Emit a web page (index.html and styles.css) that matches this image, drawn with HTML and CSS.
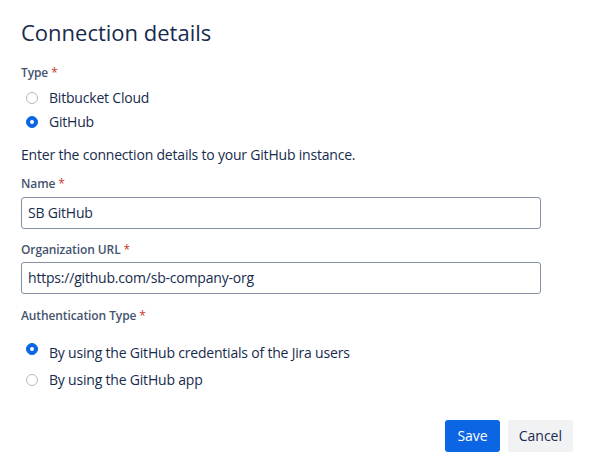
FILE: index.html
```html
<!DOCTYPE html>
<html lang="en">
<head>
<meta charset="utf-8">
<title>Connection details</title>
<link rel="stylesheet" href="styles.css">
</head>
<body>
<main class="page">
  <h1 class="title">Connection details</h1>

  <div class="label label-type">Type<span class="req">*</span></div>
  <div class="radio-group radio-group-type">
    <div class="radio-row"><span class="radio"></span><span class="radio-text">Bitbucket Cloud</span></div>
    <div class="radio-row"><span class="radio checked"></span><span class="radio-text">GitHub</span></div>
  </div>

  <p class="desc">Enter the connection details to your GitHub instance.</p>

  <div class="label label-name">Name<span class="req">*</span></div>
  <div class="input input-name">SB GitHub</div>

  <div class="label label-org">Organization URL<span class="req">*</span></div>
  <div class="input input-org">https://github.com/sb-company-org</div>

  <div class="label label-auth">Authentication Type<span class="req">*</span></div>
  <div class="radio-group radio-group-auth">
    <div class="radio-row radio-row-top"><span class="radio checked"></span><span class="radio-text">By using the GitHub credentials of the Jira users</span></div>
    <div class="radio-row radio-row-second"><span class="radio"></span><span class="radio-text">By using the GitHub app</span></div>
  </div>

  <div class="actions">
    <button class="btn btn-primary" type="button">Save</button>
    <button class="btn btn-subtle" type="button">Cancel</button>
  </div>
</main>
</body>
</html>
```
FILE: styles.css
```css
* { box-sizing: border-box; }
html, body { margin: 0; padding: 0; background: #ffffff; }
body {
  font-family: "Open Sans", "Noto Sans", sans-serif;
  font-size: 14px;
  color: #172B4D;
  letter-spacing: -0.2px;
}
.page {
  padding: 0 21px;
  display: flex;
  flex-direction: column;
  align-items: flex-start;
}
.title {
  margin: 20px 0 0;
  font-size: 22px;
  line-height: 24px;
  font-weight: 500;
  letter-spacing: 0;
  color: #172B4D;
}
.label {
  font-size: 12px;
  line-height: 16px;
  font-weight: 600;
  letter-spacing: -0.1px;
  color: #44546F;
}
.req { color: #C9372C; font-weight: 400; padding-left: 3px; }
.label-type { margin-top: 21px; }
.radio-group { display: flex; flex-direction: column; }
.radio-group-type { margin-top: 5px; }
.radio-row {
  display: flex;
  align-items: center;
  height: 24px;
  line-height: 20px;
  padding-left: 5px;
  gap: 11px;
}
.radio {
  width: 12px;
  height: 12px;
  flex: 0 0 12px;
  border-radius: 50%;
  border: 1px solid #B3B9C4;
  background: #ffffff;
  display: flex;
  align-items: center;
  justify-content: center;
}
.radio.checked {
  background: #0C66E4;
  border-color: #0C66E4;
}
.radio.checked::after {
  content: "";
  width: 4px;
  height: 4px;
  border-radius: 50%;
  background: #ffffff;
}
.desc {
  margin: 11px 0 0;
  line-height: 20px;
}
.label-name { margin-top: 11px; }
.input {
  width: 520px;
  height: 32px;
  border: 1px solid #8590A2;
  border-radius: 3px;
  padding: 0 6px;
  display: flex;
  align-items: center;
  line-height: 20px;
  color: #172B4D;
}
.input-name { margin-top: 5px; }
.label-org { margin-top: 13px; }
.input-org { margin-top: 4px; }
.label-auth { margin-top: 14px; }
.radio-group-auth { margin-top: 18px; gap: 2px; }
.radio-row-top { align-items: flex-start; }
.radio-row-top .radio { margin-top: 1px; }
.radio-row-top .radio-text { margin-top: 1px; }
.actions {
  margin-top: 28px;
  align-self: stretch;
  display: flex;
  justify-content: flex-end;
  gap: 8px;
}
.btn {
  height: 32px;
  border: none;
  border-radius: 3px;
  padding: 0 12px;
  font-family: "Open Sans", "Noto Sans", sans-serif;
  font-size: 14px;
  font-weight: 500;
  line-height: 20px;
  letter-spacing: 0;
  cursor: pointer;
}
.btn-primary { background: #0C66E4; color: #ffffff; }
.btn-subtle { background: #F1F2F4; color: #172B4D; padding: 0 11px; }
```
